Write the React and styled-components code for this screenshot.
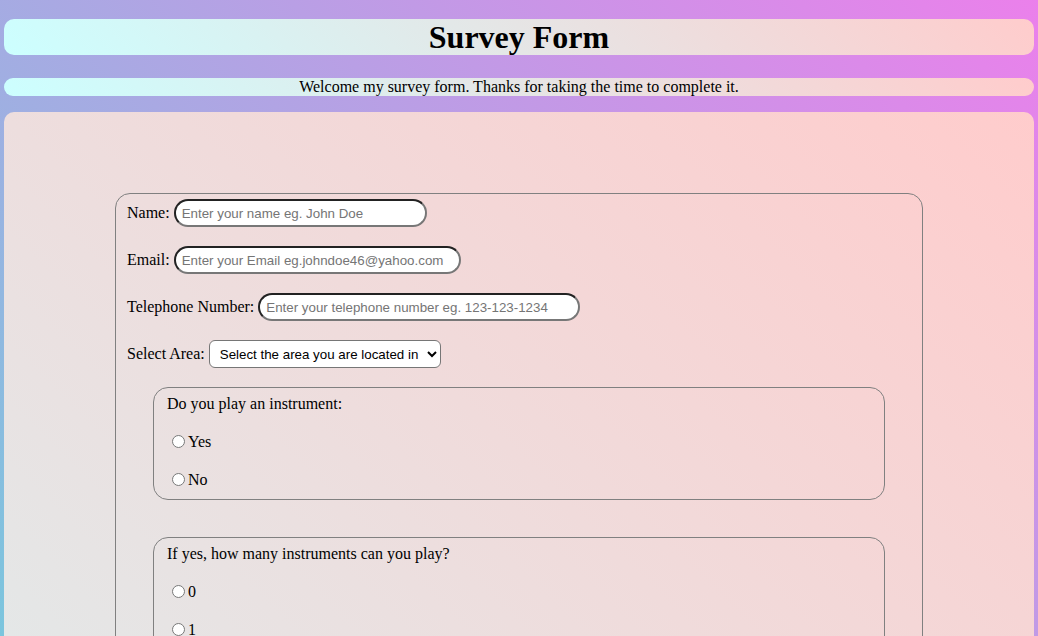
import styled, { createGlobalStyle } from "styled-components";

const GlobalStyle = createGlobalStyle`
  html, body {
    margin: 0;
    padding: 0;
  }
  body {
    font-family: "Liberation Serif", "Times New Roman", serif;
    font-size: 16px;
    color: #000;
  }
`;

const Page = styled.div`
  min-height: 2030px;
  box-sizing: border-box;
  padding: 19px 4px 18px;
  display: flex;
  flex-direction: column;
  background: linear-gradient(45deg, #1effd2, #eb80eb);
`;

const Panel = styled.div`
  border-radius: 10px;
  background: linear-gradient(45deg, #ccffff, #ffcccc);
`;

const Title = styled(Panel)`
  margin: 0;
  height: 36px;
  line-height: 36px;
  font-size: 32px;
  font-weight: bold;
  text-align: center;
`;

const Welcome = styled(Panel)`
  margin-top: 23px;
  height: 18px;
  line-height: 18px;
  text-align: center;
`;

const Main = styled(Panel)`
  margin-top: 16px;
  flex: 1;
  padding: 81px 0 60px;
`;

const Form = styled.form`
  width: 808px;
  box-sizing: border-box;
  margin: 0 auto;
  border: 1px solid #808080;
  border-radius: 15px;
  padding: 5px 11px 30px;
  display: flex;
  flex-direction: column;
  gap: 19px;
`;

const Row = styled.div`
  display: flex;
  align-items: center;
  gap: 4px;
  height: 28px;
`;

const TextInput = styled.input`
  box-sizing: border-box;
  width: ${(p) => p.$w}px;
  height: 28px;
  border: 2px solid;
  border-color: #222 #777 #777 #222;
  border-radius: 14px;
  background: #fff;
  padding: 0 6px;
  font-family: "Liberation Sans", Arial, sans-serif;
  font-size: 13.33px;
  outline: none;
  &::placeholder {
    color: #757575;
  }
`;

const Select = styled.select`
  box-sizing: border-box;
  width: 232px;
  height: 28px;
  border: 1px solid #767676;
  border-radius: 6px;
  background: #fff;
  padding: 0 4px 0 6px;
  font-family: "Liberation Sans", Arial, sans-serif;
  font-size: 13.33px;
  color: #000;
`;

const Group = styled.div`
  margin: 0 26px 18px;
  border: 1px solid #808080;
  border-radius: 15px;
  padding: 6px 13px 10px;
  display: flex;
  flex-direction: column;
  gap: 19px;
`;

const Line = styled.div`
  display: flex;
  align-items: center;
  height: 19px;
`;

const Radio = styled.input`
  width: 13px;
  height: 13px;
  margin: 0 3px 1px 5px;
`;

const TextArea = styled.textarea`
  width: 400px;
  height: 80px;
  border: 2px solid;
  border-color: #222 #777 #777 #222;
  border-radius: 14px;
  padding: 6px;
  font-family: "Liberation Sans", Arial, sans-serif;
  font-size: 13.33px;
`;

const Submit = styled.button`
  align-self: center;
  width: 120px;
  height: 30px;
  border: 1px solid #767676;
  border-radius: 6px;
  background: #efefef;
  font-family: "Liberation Sans", Arial, sans-serif;
  font-size: 13.33px;
`;

const groups = [
  { name: "plays", q: "Do you play an instrument:", opts: ["Yes", "No"] },
  {
    name: "count",
    q: "If yes, how many instruments can you play?",
    opts: ["0", "1", "2", "3", "More than 3"],
  },
  {
    name: "years",
    q: "How long have you been playing?",
    opts: ["Less than a year", "1-3 years", "4-6 years", "More than 6 years"],
  },
  {
    name: "lessons",
    q: "Would you like to take music lessons?",
    opts: ["Yes", "No", "Maybe"],
  },
];

const RadioGroup = ({ name, q, opts }) => (
  <Group>
    <Line>{q}</Line>
    {opts.map((o) => (
      <Line key={o}>
        <Radio type="radio" name={name} value={o} />
        {o}
      </Line>
    ))}
  </Group>
);

export default function App() {
  return (
    <>
      <GlobalStyle />
      <Page>
        <Title as="h1">Survey Form</Title>
        <Welcome>Welcome my survey form. Thanks for taking the time to complete it.</Welcome>
        <Main>
          <Form onSubmit={(e) => e.preventDefault()}>
            <Row>
              Name:
              <TextInput $w={253} placeholder="Enter your name eg. John Doe" />
            </Row>
            <Row>
              Email:
              <TextInput $w={287} placeholder="Enter your Email eg.johndoe46@yahoo.com" />
            </Row>
            <Row>
              Telephone Number:
              <TextInput $w={322} placeholder="Enter your telephone number eg. 123-123-1234" />
            </Row>
            <Row>
              Select Area:
              <Select defaultValue="">
                <option value="">Select the area you are located in</option>
                <option>North</option>
                <option>South</option>
                <option>East</option>
                <option>West</option>
              </Select>
            </Row>
            {groups.map((g) => (
              <RadioGroup key={g.name} {...g} />
            ))}
            <Line>Any comments or suggestions?</Line>
            <TextArea placeholder="Enter your comments here" />
            <Submit type="submit">Submit</Submit>
          </Form>
        </Main>
      </Page>
    </>
  );
}
